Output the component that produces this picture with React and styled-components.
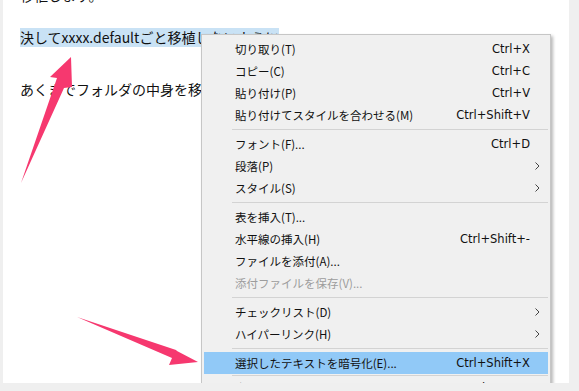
import styled, { createGlobalStyle } from "styled-components"

const GlobalStyle = createGlobalStyle`
  html, body {
    margin: 0;
    padding: 0;
    background: #efefef;
  }
  body {
    font-family: "Noto Sans CJK JP", sans-serif;
    color: #111;
  }
`

const items = [
  { label: "切り取り(T)", key: "Ctrl+X" },
  { label: "コピー(C)", key: "Ctrl+C" },
  { label: "貼り付け(P)", key: "Ctrl+V" },
  { label: "貼り付けてスタイルを合わせる(M)", key: "Ctrl+Shift+V" },
  { sep: true },
  { label: "フォント(F)...", key: "Ctrl+D" },
  { label: "段落(P)", sub: true },
  { label: "スタイル(S)", sub: true },
  { sep: true },
  { label: "表を挿入(T)..." },
  { label: "水平線の挿入(H)", key: "Ctrl+Shift+-" },
  { label: "ファイルを添付(A)..." },
  { label: "添付ファイルを保存(V)...", disabled: true },
  { sep: true },
  { label: "チェックリスト(D)", sub: true },
  { label: "ハイパーリンク(H)", sub: true },
  { sep: true },
  { label: "選択したテキストを暗号化(E)...", key: "Ctrl+Shift+X", active: true },
  { sep: true, $short: true },
  { label: "書式を簡略化(S)", key: "Ctrl+Space" },
]

function Chevron() {
  return (
    <svg width="5" height="8" viewBox="0 0 5 8">
      <polyline points="0.5,0.5 4,4 0.5,7.5" fill="none" stroke="#444" strokeWidth="1" />
    </svg>
  )
}

export default function App() {
  return (
    <Frame>
      <GlobalStyle />
      <Page>
        <Para $top={-14}>移植します。</Para>
        <Para $top={23}>
          <Selected>決してxxxx.defaultごと移植しないように</Selected>
        </Para>
        <Para $top={33}>あくまでフォルダの中身を移植しましょう。</Para>

        <Menu>
          {items.map((it, i) =>
            it.sep ? (
              <Separator key={i} $short={it.$short} />
            ) : (
              <Item key={i} $active={it.active} $disabled={it.disabled}>
                <Label>{it.label}</Label>
                {it.key && <Shortcut>{it.key}</Shortcut>}
                <Arrow>{it.sub && <Chevron />}</Arrow>
              </Item>
            )
          )}
        </Menu>
      </Page>

      <Arrows width="579" height="391" viewBox="0 0 579 391">
        <polygon points="71,57 50,77 57,78 21,183 64,88 72,87" />
        <polygon points="77,317 176,350 177,351 198,362 169,365 172,358" />
      </Arrows>
    </Frame>
  )
}

const Frame = styled.div`
  position: relative;
  width: 579px;
  height: 391px;
  box-sizing: border-box;
  padding: 0 10px 0 3px;
  background: #efefef;
  overflow: hidden;
`

const Page = styled.div`
  position: relative;
  height: 383px;
  background: #ffffff;
  overflow: hidden;
  padding-left: 17px;
`

const Para = styled.p`
  margin: ${(p) => p.$top}px 0 0;
  font-size: 14px;
  line-height: 19px;
  white-space: nowrap;
`

const Selected = styled.span`
  display: inline-block;
  background: #c9e2f5;
  line-height: 19px;
`

const Menu = styled.div`
  position: absolute;
  left: 198px;
  top: 34px;
  width: 350px;
  box-sizing: border-box;
  padding: 3px 2px;
  background: #f0f0f0;
  border: 1px solid #c6c6c6;
  box-shadow: 2px 2px 3px rgba(0, 0, 0, 0.28);
`

const Item = styled.div`
  display: flex;
  align-items: center;
  height: 22px;
  padding-left: 31px;
  background: ${(p) => (p.$active ? "#91c9f7" : "transparent")};
  color: ${(p) => (p.$disabled ? "#9d9d9d" : "#111")};
  white-space: nowrap;
`

const Label = styled.span`
  flex: 1;
  font-size: 11.5px;
`

const Shortcut = styled.span`
  font-family: "DejaVu Sans", sans-serif;
  font-size: 11.5px;
`

const Arrow = styled.span`
  display: flex;
  align-items: center;
  width: 13px;
  padding-left: 5px;
`

const Separator = styled.div`
  display: flex;
  align-items: center;
  height: ${(p) => (p.$short ? 3 : 7)}px;
  &::after {
    content: "";
    flex: 1;
    height: 1px;
    margin-left: 28px;
    background: #d3d3d3;
  }
`

const Arrows = styled.svg`
  position: absolute;
  left: 0;
  top: 0;
  pointer-events: none;
  fill: #f6386f;
`
